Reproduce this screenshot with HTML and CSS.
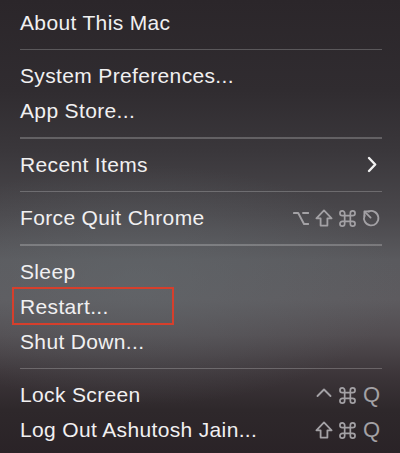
FILE: index.html
```html
<!DOCTYPE html>
<html>
<head>
<meta charset="utf-8">
<link rel="stylesheet" href="styles.css">
</head>
<body>
<div class="menu">
  <div class="item"><span class="label">About This Mac</span></div>
  <div class="sep"></div>
  <div class="item"><span class="label">System Preferences...</span></div>
  <div class="item"><span class="label">App Store...</span></div>
  <div class="sep"></div>
  <div class="item"><span class="label">Recent Items</span>
    <svg class="chev" width="10" height="17" viewBox="0 0 10 17"><path d="M2 2 L8.2 8.5 L2 15" fill="none" stroke="#f2f2f2" stroke-width="2.4" stroke-linecap="round" stroke-linejoin="round"/></svg>
  </div>
  <div class="sep"></div>
  <div class="item"><span class="label">Force Quit Chrome</span>
    <span class="keys">
      <svg class="ico" width="16" height="17" viewBox="0 0 16 17"><path d="M0.9 3 H5.2 L11 14 H15.4 M10 3 H15.4" fill="none" stroke="#a3a1a5" stroke-width="1.9" stroke-linecap="round" stroke-linejoin="round"/></svg>
      <svg class="ico" width="18" height="18" viewBox="0 0 18 18"><path d="M9 1.4 L16.6 9.3 H12.4 V16.6 H5.6 V9.3 H1.4 Z" fill="none" stroke="#a3a1a5" stroke-width="1.8" stroke-linejoin="round"/></svg>
      <svg class="ico" width="17" height="17" viewBox="0 0 18 18"><path d="M6 6 V3.5 A2.5 2.5 0 1 0 3.5 6 H14.5 A2.5 2.5 0 1 0 12 3.5 V14.5 A2.5 2.5 0 1 0 14.5 12 H3.5 A2.5 2.5 0 1 0 6 14.5 Z" fill="none" stroke="#a3a1a5" stroke-width="1.8" stroke-linejoin="round"/></svg>
      <svg class="ico" width="18" height="18" viewBox="0 0 18 18"><path d="M2.6 6.3 A7.2 7.2 0 1 0 6.3 2.6" fill="none" stroke="#a3a1a5" stroke-width="1.8" stroke-linecap="round"/><path d="M2.8 2.8 L8.6 8.6" stroke="#a3a1a5" stroke-width="1.8" stroke-linecap="round"/><path d="M2.4 7.2 V2.4 H7.2" fill="none" stroke="#a3a1a5" stroke-width="1.8" stroke-linecap="round" stroke-linejoin="round"/></svg>
    </span>
  </div>
  <div class="sep"></div>
  <div class="item"><span class="label">Sleep</span></div>
  <div class="item"><span class="label">Restart...</span><span class="redbox"></span></div>
  <div class="item"><span class="label">Shut Down...</span></div>
  <div class="sep"></div>
  <div class="item"><span class="label">Lock Screen</span>
    <span class="keys">
      <svg class="ico caret" width="16" height="17" viewBox="0 0 16 17"><path d="M1.5 9 L8 2.5 L14.5 9" fill="none" stroke="#a3a1a5" stroke-width="1.9" stroke-linecap="round" stroke-linejoin="round"/></svg>
      <svg class="ico" width="17" height="17" viewBox="0 0 18 18"><path d="M6 6 V3.5 A2.5 2.5 0 1 0 3.5 6 H14.5 A2.5 2.5 0 1 0 12 3.5 V14.5 A2.5 2.5 0 1 0 14.5 12 H3.5 A2.5 2.5 0 1 0 6 14.5 Z" fill="none" stroke="#a3a1a5" stroke-width="1.8" stroke-linejoin="round"/></svg>
      <span class="q">Q</span>
    </span>
  </div>
  <div class="item"><span class="label">Log Out Ashutosh Jain...</span>
    <span class="keys">
      <svg class="ico" width="18" height="18" viewBox="0 0 18 18"><path d="M9 1.4 L16.6 9.3 H12.4 V16.6 H5.6 V9.3 H1.4 Z" fill="none" stroke="#a3a1a5" stroke-width="1.8" stroke-linejoin="round"/></svg>
      <svg class="ico" width="17" height="17" viewBox="0 0 18 18"><path d="M6 6 V3.5 A2.5 2.5 0 1 0 3.5 6 H14.5 A2.5 2.5 0 1 0 12 3.5 V14.5 A2.5 2.5 0 1 0 14.5 12 H3.5 A2.5 2.5 0 1 0 6 14.5 Z" fill="none" stroke="#a3a1a5" stroke-width="1.8" stroke-linejoin="round"/></svg>
      <span class="q">Q</span>
    </span>
  </div>
</div>
</body>
</html>
```

FILE: styles.css
```css
html, body {
  margin: 0;
  padding: 0;
}
body {
  width: 400px;
  height: 453px;
  overflow: hidden;
  background:
    radial-gradient(ellipse 260px 120px at 140px 285px, rgba(100,106,110,0.55), rgba(100,106,110,0) 100%),
    linear-gradient(to bottom, #2b262a 0px, #302c30 90px, #3a373b 150px, #4a484c 215px, #5a5a5e 260px, #5d5b5f 300px, #524d51 335px, #3c3539 375px, #2e282b 410px, #2a2327 453px);
  font-family: "Liberation Sans", Arial, sans-serif;
  color: #f1f0f1;
}
.menu {
  padding: 5px 18px 0 20px;
  display: flex;
  flex-direction: column;
}
.item {
  position: relative;
  height: 35px;
  flex: none;
  display: flex;
  align-items: center;
  justify-content: space-between;
}
.label {
  font-size: 21px;
  letter-spacing: 0.35px;
}
.sep {
  flex: none;
  height: 1.5px;
  margin: 8.5px 0 8.5px 0;
  background: rgba(255,255,255,0.22);
}
.chev {
  display: block;
  margin-right: 5px;
}
.keys {
  display: flex;
  align-items: center;
  gap: 6px;
  margin-right: 2px;
  color: #a3a1a5;
}
.ico {
  display: block;
}
.caret {
  margin-right: 1px;
}
.q {
  font-family: "Liberation Sans", Arial, sans-serif;
  font-size: 22px;
  line-height: 1;
  margin-left: 1px;
}
.redbox {
  position: absolute;
  left: -8px;
  top: -2px;
  width: 162px;
  height: 38px;
  box-sizing: border-box;
  border: 2px solid #d63f2c;
}
```
